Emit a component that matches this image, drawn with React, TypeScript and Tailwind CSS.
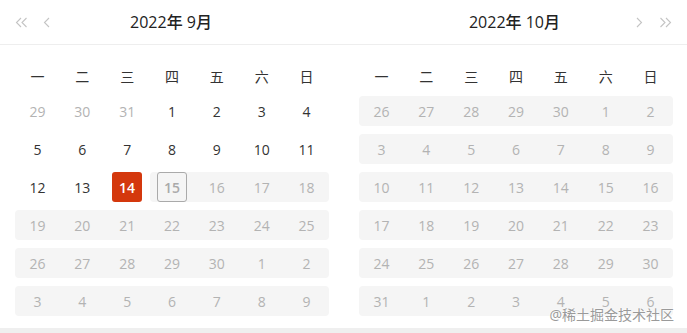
import React from 'react';

type Day = { n: number; muted?: boolean; disabled?: boolean; selected?: boolean; today?: boolean };

const weekdays = ['一', '二', '三', '四', '五', '六', '日'];

// September 2022, Monday first
const sep: Day[][] = [
  [{ n: 29, muted: true }, { n: 30, muted: true }, { n: 31, muted: true }, { n: 1 }, { n: 2 }, { n: 3 }, { n: 4 }],
  [{ n: 5 }, { n: 6 }, { n: 7 }, { n: 8 }, { n: 9 }, { n: 10 }, { n: 11 }],
  [{ n: 12 }, { n: 13 }, { n: 14, selected: true }, { n: 15, disabled: true, today: true }, { n: 16, disabled: true }, { n: 17, disabled: true }, { n: 18, disabled: true }],
  [19, 20, 21, 22, 23, 24, 25].map((n) => ({ n, disabled: true })),
  [26, 27, 28, 29, 30, 1, 2].map((n) => ({ n, disabled: true })),
  [3, 4, 5, 6, 7, 8, 9].map((n) => ({ n, disabled: true })),
];

const oct: Day[][] = [
  [26, 27, 28, 29, 30, 1, 2],
  [3, 4, 5, 6, 7, 8, 9],
  [10, 11, 12, 13, 14, 15, 16],
  [17, 18, 19, 20, 21, 22, 23],
  [24, 25, 26, 27, 28, 29, 30],
  [31, 1, 2, 3, 4, 5, 6],
].map((r) => r.map((n) => ({ n, disabled: true })));

function Chevron({ dir, double }: { dir: 'left' | 'right'; double?: boolean }) {
  const flip = dir === 'right' ? 'scale(-1,1)' : undefined;
  return (
    <svg width={double ? 13 : 8} height="11" viewBox={double ? '0 0 13 11' : '0 0 8 11'} className="text-[#c4c4c4]">
      <g transform={flip} style={{ transformOrigin: 'center' }} fill="none" stroke="currentColor" strokeWidth="1.1">
        {double ? (
          <>
            <path d="M6 1 L1.5 5.5 L6 10" />
            <path d="M11.5 1 L7 5.5 L11.5 10" />
          </>
        ) : (
          <path d="M6 1 L1.5 5.5 L6 10" />
        )}
      </g>
    </svg>
  );
}

function Row({ days }: { days: Day[] }) {
  const first = days.findIndex((d) => d.disabled);
  return (
    <div className="grid grid-cols-7 h-[30px]">
      {days.map((d, i) => {
        const isStart = d.disabled && i === first;
        const isEnd = d.disabled && i === 6;
        return (
          <div
            key={i}
            className={
              'flex items-center justify-center ' +
              (d.disabled ? 'bg-[#f5f5f5] ' : '') +
              (isStart ? 'rounded-l-[4px] ' : '') +
              (isEnd ? 'rounded-r-[4px] ' : '')
            }
          >
            {d.selected ? (
              <div className="w-[30px] h-[30px] rounded-[3px] bg-[#d4380d] text-white font-semibold flex items-center justify-center">
                {d.n}
              </div>
            ) : d.today ? (
              <div className="w-[30px] h-[30px] rounded-[3px] border border-[#aaaaaa] text-[#aaaaaa] font-semibold flex items-center justify-center">
                {d.n}
              </div>
            ) : (
              <span className={d.disabled ? 'text-[#b3b3b3]' : d.muted ? 'text-[#b3b3b3]' : 'text-[#333333]'}>{d.n}</span>
            )}
          </div>
        );
      })}
    </div>
  );
}

function Panel({ title, side }: { title: string; side: 'left' | 'right' }) {
  return (
    <div className={side === 'left' ? 'w-[344px]' : 'flex-1'}>
      <div className="flex items-center h-[44px] px-[15px]">
        <div className="w-[40px] flex items-center gap-[15px]">
          {side === 'left' && (
            <>
              <Chevron dir="left" double />
              <Chevron dir="left" />
            </>
          )}
        </div>
        <div className="flex-1 text-center text-[16px] font-medium text-[#222222]">{title}</div>
        <div className="w-[42px] flex items-center justify-end gap-[16px]">
          {side === 'right' && (
            <>
              <Chevron dir="right" />
              <Chevron dir="right" double />
            </>
          )}
        </div>
      </div>
    </div>
  );
}

function Body({ rows, side }: { rows: Day[][]; side: 'left' | 'right' }) {
  return (
    <div className={(side === 'left' ? 'w-[344px] pl-[15px] pr-[15px]' : 'flex-1 pl-[15px] pr-[14px]') + ' pt-[16px]'}>
      <div className="grid grid-cols-7 h-[30px] mb-[5px] text-[#333333]">
        {weekdays.map((w) => (
          <div key={w} className="flex items-center justify-center">{w}</div>
        ))}
      </div>
      <div className="flex flex-col gap-[8px]">
        {rows.map((r, i) => (
          <Row key={i} days={r} />
        ))}
      </div>
    </div>
  );
}

export default function App() {
  return (
    <div
      className="w-[687px] h-[333px] bg-[#efefef] text-[14px]"
      style={{ fontFamily: '"Open Sans", "Noto Sans CJK SC", sans-serif' }}
    >
      <div className="relative h-[328px] bg-white">
        <div className="flex border-b border-[#eeeeee]">
          <Panel title="2022年 9月" side="left" />
          <Panel title="2022年 10月" side="right" />
        </div>
        <div className="flex">
          <Body rows={sep} side="left" />
          <Body rows={oct} side="right" />
        </div>
        <div
          className="absolute right-[13px] bottom-[3px] text-[14px] text-[#9a9a9a]"
          style={{ textShadow: '0 0 2px #fff, 0 0 2px #fff' }}
        >
          @稀土掘金技术社区
        </div>
      </div>
    </div>
  );
}
